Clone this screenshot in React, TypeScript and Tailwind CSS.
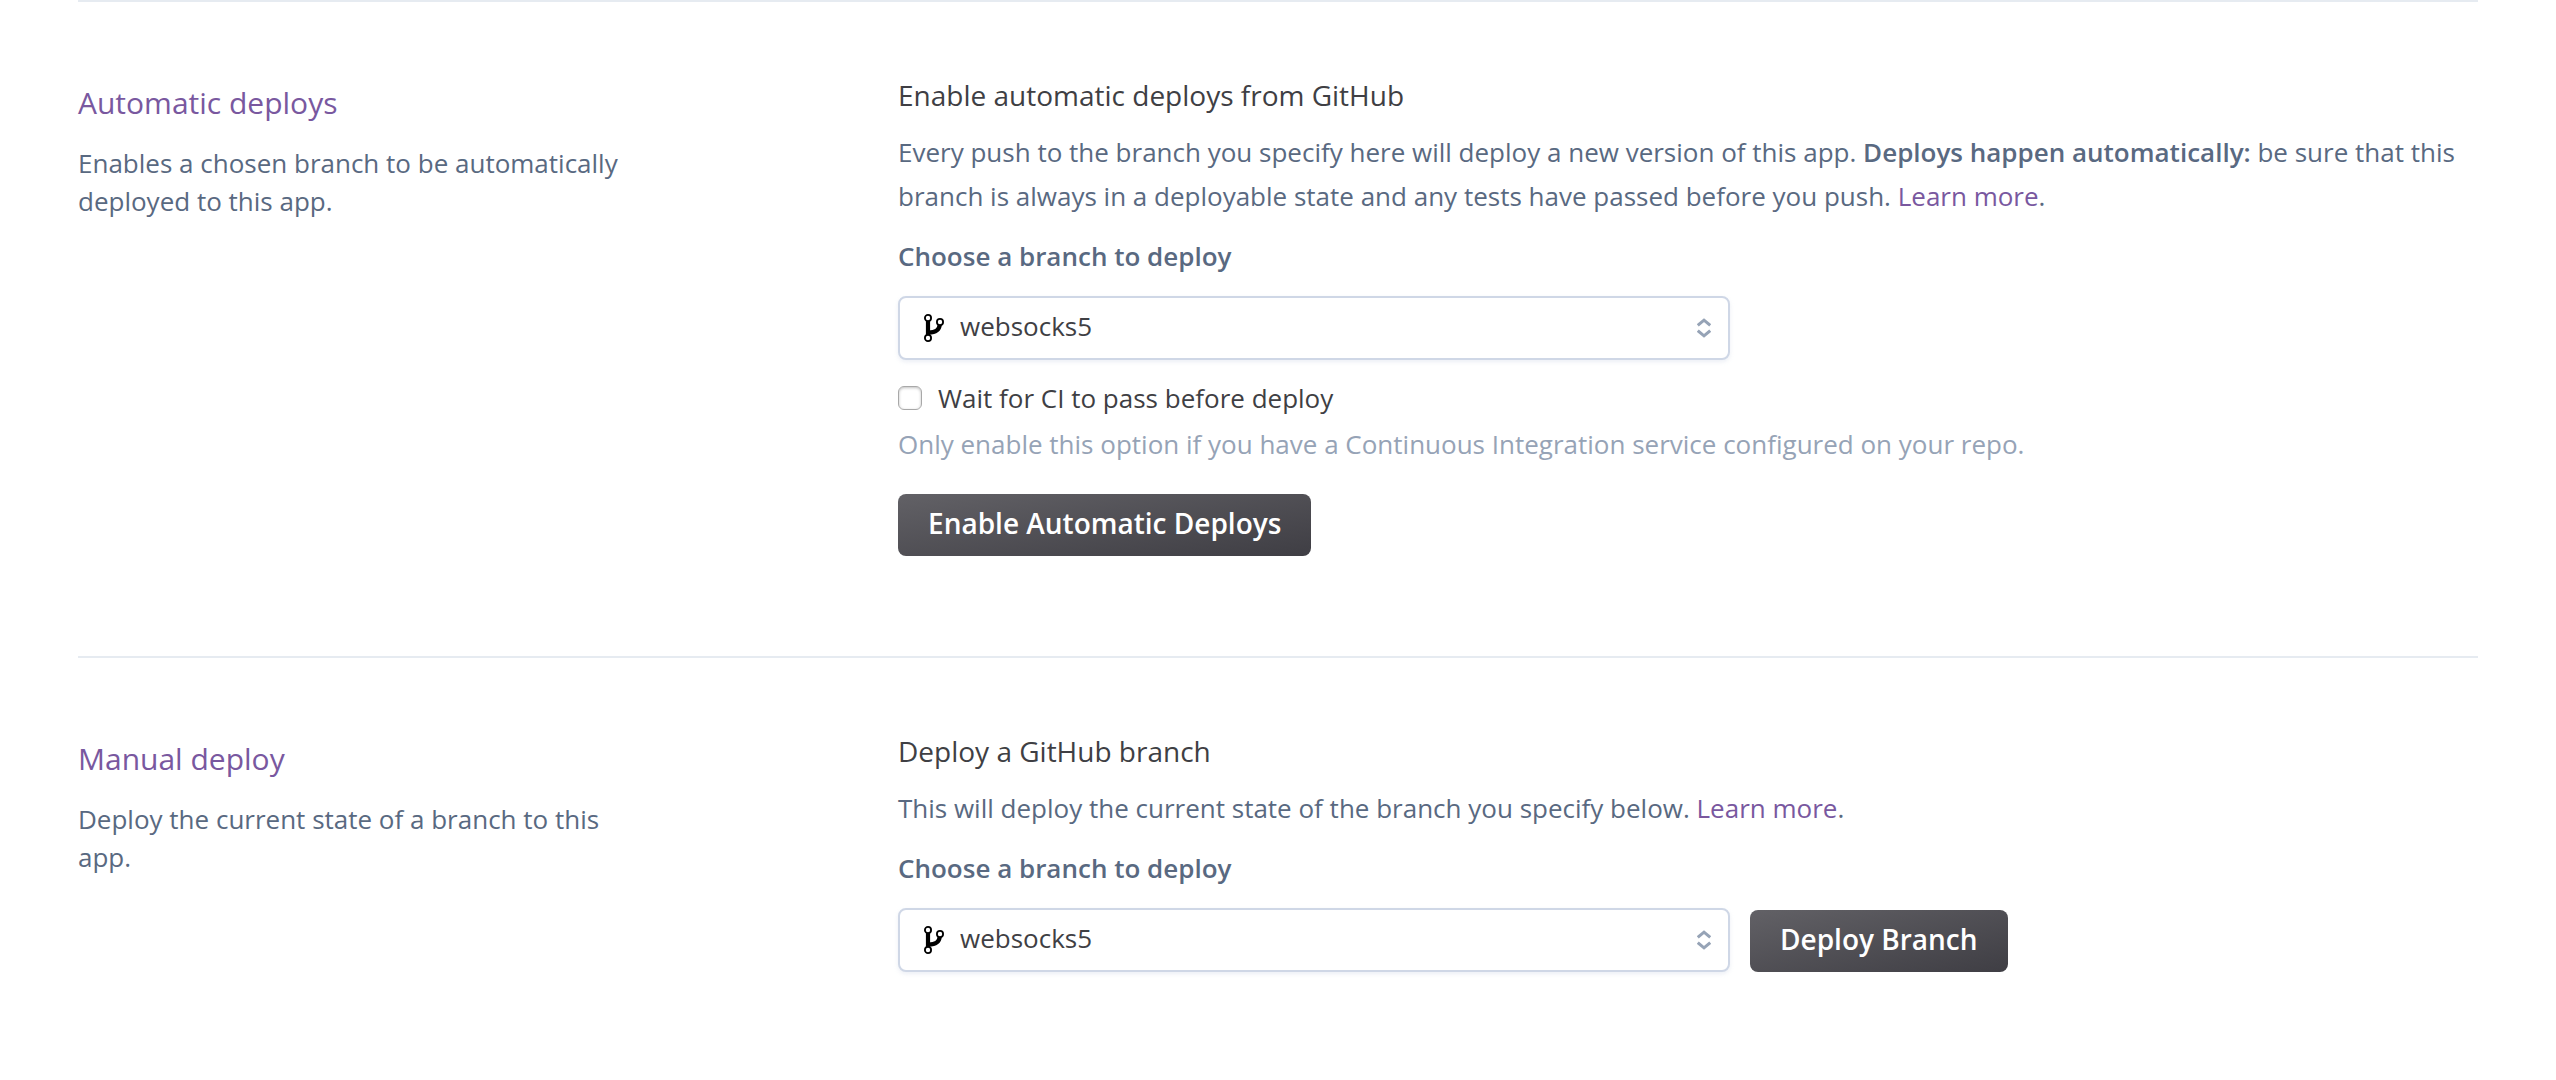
import type { ReactNode } from "react";

function BranchIcon() {
  return (
    <svg viewBox="0 0 20 28" className="pointer-events-none absolute left-[26px] top-[18px] h-7 w-5" fill="none" stroke="#000" aria-hidden="true">
      <path d="M4 6.5V21.5" strokeWidth="4.2" />
      <path d="M4.5 18.6C11 18.4 15.2 17 15.8 10.5" strokeWidth="4.2" />
      <circle cx="4" cy="4" r="3.1" fill="#fff" strokeWidth="1.8" />
      <circle cx="16" cy="8" r="3.1" fill="#fff" strokeWidth="1.8" />
      <circle cx="4" cy="24" r="3.1" fill="#fff" strokeWidth="1.8" />
    </svg>
  );
}

function SortIcon() {
  return (
    <svg viewBox="0 0 14 20" className="pointer-events-none absolute right-[19px] top-[22px] h-5 w-3.5" fill="none" stroke="#96a3b6" strokeWidth="3" aria-hidden="true">
      <path d="M0.8 7.4 7 2.2l6.2 5.2" />
      <path d="M0.8 12.6 7 17.8l6.2-5.2" />
    </svg>
  );
}

function BranchSelect({ id, children }: { id: string; children?: ReactNode }) {
  return (
    <>
      <label htmlFor={id} className="mt-4 block font-semibold">
        Choose a branch to deploy
      </label>
      <div className="mt-[18px] flex items-end gap-5">
        <div className="relative w-[832px] max-w-full">
          <select
            id={id}
            className="block h-16 w-full appearance-none rounded-lg border-2 border-[#cfd7e6] bg-white pr-16 pb-1 pl-15 text-[#3f3f44] shadow-[0_2px_4px_rgba(207,215,230,0.4)]"
          >
            <option>websocks5</option>
          </select>
          <BranchIcon />
          <SortIcon />
        </div>
        {children}
      </div>
    </>
  );
}

function DarkButton({ children }: { children: ReactNode }) {
  return (
    <button
      type="button"
      className="h-[62px] shrink-0 rounded-lg bg-linear-to-br from-[#626166] to-[#3f3e44] px-[30px] pb-1 text-[28px] font-semibold whitespace-nowrap text-white"
    >
      {children}
    </button>
  );
}

function LearnMore() {
  return (
    <a href="#learn-more" className="text-[#79589f]">
      Learn more
    </a>
  );
}

function Section({ title, summary, heading, children }: { title: string; summary: string; heading: string; children: ReactNode }) {
  return (
    <section className="grid grid-cols-3 border-t-2 border-[#e6ebf1] pb-[100px]">
      <div className="max-w-[570px] pt-20">
        <h2 className="text-[30px] leading-[42px] text-[#79589f]">{title}</h2>
        <p className="mt-5 leading-[38px]">{summary}</p>
      </div>
      <div className="col-span-2 pt-[73px] pl-5 leading-11">
        <h3 className="mb-[15px] text-[28px] leading-10 text-[#3f3f44]">{heading}</h3>
        {children}
      </div>
    </section>
  );
}

export default function App() {
  return (
    <main className="min-h-screen bg-white px-[78px] font-['Open_Sans','Noto_Sans',sans-serif] text-[26px] text-[#596981]">
      <Section
        title="Automatic deploys"
        summary="Enables a chosen branch to be automatically deployed to this app."
        heading="Enable automatic deploys from GitHub"
      >
        <p>
          Every push to the branch you specify here will deploy a new version of this app.{" "}
          <strong className="font-semibold">Deploys happen automatically:</strong> be sure that this branch is always
          in a deployable state and any tests have passed before you push. <LearnMore />.
        </p>
        <BranchSelect id="auto-branch" />
        <label className="mt-4 flex w-fit items-center gap-4 text-[#3f3f44]">
          <input
            type="checkbox"
            className="size-6 appearance-none rounded-md border border-[#a8a8a8] bg-white shadow-[inset_0_1px_3px_rgba(0,0,0,0.25)] checked:bg-[#79589f]"
          />
          Wait for CI to pass before deploy
        </label>
        <p className="mt-0.5 mb-7 text-[#96a3b6]">
          Only enable this option if you have a Continuous Integration service configured on your repo.
        </p>
        <DarkButton>Enable Automatic Deploys</DarkButton>
      </Section>
      <Section
        title="Manual deploy"
        summary="Deploy the current state of a branch to this app."
        heading="Deploy a GitHub branch"
      >
        <p>
          This will deploy the current state of the branch you specify below. <LearnMore />.
        </p>
        <BranchSelect id="manual-branch">
          <DarkButton>Deploy Branch</DarkButton>
        </BranchSelect>
      </Section>
    </main>
  );
}
